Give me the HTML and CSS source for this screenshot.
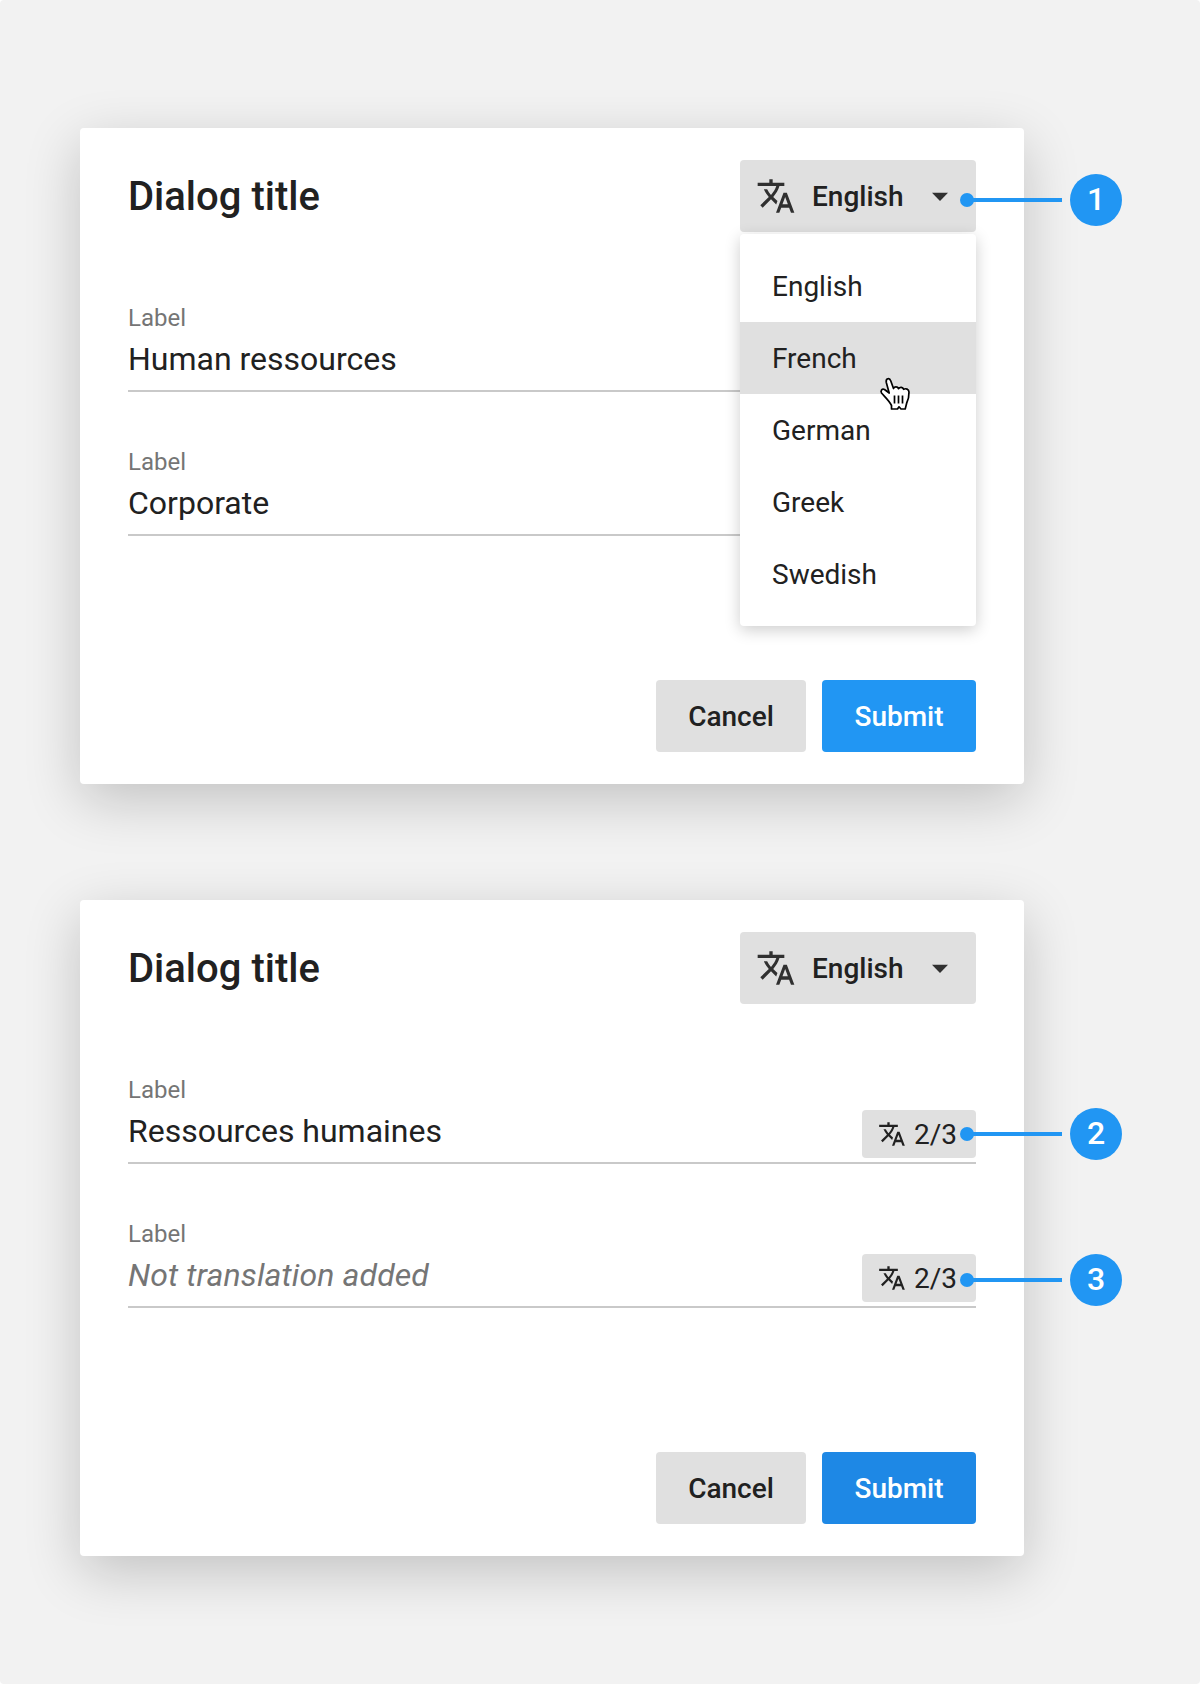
FILE: index.html
```html
<!DOCTYPE html>
<html lang="en">
<head>
<meta charset="utf-8">
<title>Dialog translations</title>
<link rel="stylesheet" href="styles.css">
</head>
<body>
<svg class="sprite" aria-hidden="true">
  <symbol id="translate" viewBox="0 0 24 24"><path d="M12.87 15.07l-2.54-2.51.03-.03c1.74-1.94 2.98-4.17 3.71-6.53H17V4h-7V2H8v2H1v1.99h11.17C11.5 7.92 10.44 9.75 9 11.35 8.07 10.32 7.3 9.19 6.69 8h-2c.73 1.63 1.73 3.17 2.98 4.56l-5.09 5.02L4 19l5-5 3.11 3.11.76-2.04zM18.5 10h-2L12 22h2l1.12-3h4.75L21 22h2l-4.5-12zm-2.62 7l1.62-4.33L19.12 17h-3.24z"/></symbol>
  <symbol id="drop" viewBox="0 0 24 24"><path d="M7.2 10l4.8 5 4.8-5z"/></symbol>
</svg>
<main class="page">
  <section class="dialog">
    <header class="dialog-header">
      <h1 class="title">Dialog title</h1>
      <div class="language">
        <button class="button select"><svg class="icon"><use href="#translate"/></svg><span class="select-text">English</span><svg class="icon"><use href="#drop"/></svg></button>
        <ul class="menu">
          <li class="option">English</li>
          <li class="option active">French</li>
          <li class="option">German</li>
          <li class="option">Greek</li>
          <li class="option">Swedish</li>
        </ul>
        <svg class="pointer" viewBox="0 0 32 34"><path d="M12.500 28.500C10 23.500 6 20 2.700 16.300C1 13.800 3 11.500 5.500 12.500L10.200 16L7.300 5.500C6.500 1.200 10.500 .3 11.800 4L14.500 11.500C15.500 9.300 18.500 9.300 19.500 11.600C21 9.800 23.800 10 24.600 12.300C26.800 11 29.800 12.200 30 15C30.100 20 29.200 23 27.700 26L26.200 32H22L20 29.800L18.500 32H12.500Z"/><path d="M15.500 18.500V26.500M19.500 18.500V26.500M23.500 18.500V26.500"/></svg>
      </div>
    </header>
    <div class="field"><span class="label">Label</span><span class="value">Human ressources</span></div>
    <div class="field"><span class="label">Label</span><span class="value">Corporate</span></div>
    <footer class="actions"><button class="button cancel">Cancel</button><button class="button submit">Submit</button></footer>
  </section>
  <section class="dialog">
    <header class="dialog-header">
      <h1 class="title">Dialog title</h1>
      <button class="button select"><svg class="icon"><use href="#translate"/></svg><span class="select-text">English</span><svg class="icon"><use href="#drop"/></svg></button>
    </header>
    <div class="field"><span class="label">Label</span><span class="value">Ressources humaines</span><span class="badge"><svg class="icon-small"><use href="#translate"/></svg>2/3</span></div>
    <div class="field"><span class="label">Label</span><span class="value empty">Not translation added</span><span class="badge"><svg class="icon-small"><use href="#translate"/></svg>2/3</span></div>
    <footer class="actions"><button class="button cancel">Cancel</button><button class="button submit pressed">Submit</button></footer>
  </section>
  <div class="callout first"><i class="dot"></i><i class="line"></i><b class="number">1</b></div>
  <div class="callout second"><i class="dot"></i><i class="line"></i><b class="number">2</b></div>
  <div class="callout third"><i class="dot"></i><i class="line"></i><b class="number">3</b></div>
</main>
</body>
</html>
```
FILE: styles.css
```css
* { box-sizing: border-box; }
html { background: #fff; }
body { margin: 0; font-family: Roboto, sans-serif; color: #212121; }
.sprite { position: absolute; width: 0; height: 0; }
.page {
  position: relative;
  display: flex;
  flex-direction: column;
  gap: 116px;
  width: 1200px;
  height: 1684px;
  padding: 128px 80px;
  border-radius: 4px;
  background: #f2f2f2;
}
.dialog {
  display: flex;
  flex-direction: column;
  width: 944px;
  height: 656px;
  padding: 32px 48px;
  border-radius: 4px;
  background: #fff;
  box-shadow: 0 16px 56px rgba(0, 0, 0, .2);
}
.dialog-header {
  display: flex;
  justify-content: space-between;
  align-items: center;
  height: 72px;
  margin-bottom: 16px;
}
.title { margin: 0; padding-top: 2px; font-size: 40px; line-height: 48px; font-weight: 500; }
.language { position: relative; }
.button {
  height: 72px;
  padding: 2px 32px 0;
  border: 0;
  border-radius: 4px;
  background: #e0e0e0;
  color: #212121;
  font: 500 28px/32px Roboto, sans-serif;
}
.select { display: flex; align-items: center; width: 236px; padding: 0 16px; }
.select-text { flex: 1; margin-left: 16px; padding-top: 2px; text-align: left; }
.icon { width: 40px; height: 40px; fill: #303030; }
.icon-small { width: 28px; height: 28px; fill: #212121; }
.menu {
  position: absolute;
  z-index: 1;
  top: 74px;
  left: 0;
  width: 236px;
  margin: 0;
  padding: 16px 0;
  border-radius: 4px;
  background: #fff;
  box-shadow: 0 4px 16px rgba(0, 0, 0, .2);
  list-style: none;
}
.option { height: 72px; padding: 1px 32px 0; font-size: 28px; line-height: 72px; }
.active { background: #e0e0e0; }
.pointer {
  position: absolute;
  z-index: 2;
  top: 217px;
  left: 139px;
  width: 32px;
  height: 34px;
  fill: #fff;
  stroke: #000;
  stroke-width: 1.7;
  stroke-linejoin: round;
}
.field {
  display: grid;
  grid-template-columns: 1fr auto;
  grid-template-rows: 28px 49px;
  align-content: end;
  row-gap: 9px;
  height: 144px;
  border-bottom: 2px solid #c9c9c9;
}
.label { color: #757575; font-size: 24px; line-height: 28px; }
.value { grid-row: 2; font-size: 32px; line-height: 36px; }
.empty { color: #757575; font-style: italic; letter-spacing: .11px; }
.badge {
  display: flex;
  grid-row: 2;
  align-items: center;
  align-self: end;
  gap: 8px;
  width: 114px;
  height: 48px;
  margin-bottom: 4px;
  padding-left: 16px;
  border-radius: 4px;
  background: #e0e0e0;
  font-size: 28px;
}
.actions { display: flex; justify-content: flex-end; gap: 16px; margin-top: auto; }
.cancel { width: 150px; }
.submit { width: 154px; background: #2196f3; color: #fff; }
.pressed { background: #1e88e5; }
.callout {
  position: absolute;
  z-index: 3;
  left: 960px;
  display: flex;
  align-items: center;
  width: 162px;
  height: 52px;
}
.first { top: 174px; }
.second { top: 1108px; }
.third { top: 1254px; }
.dot { width: 14px; height: 14px; border-radius: 50%; background: #2196f3; }
.line { width: 90px; height: 4px; margin: 0 8px 0 -2px; background: #2196f3; }
.number {
  width: 52px;
  height: 52px;
  border-radius: 50%;
  background: #2196f3;
  color: #fff;
  font-size: 32px;
  font-weight: 500;
  line-height: 50px;
  text-align: center;
}
```
